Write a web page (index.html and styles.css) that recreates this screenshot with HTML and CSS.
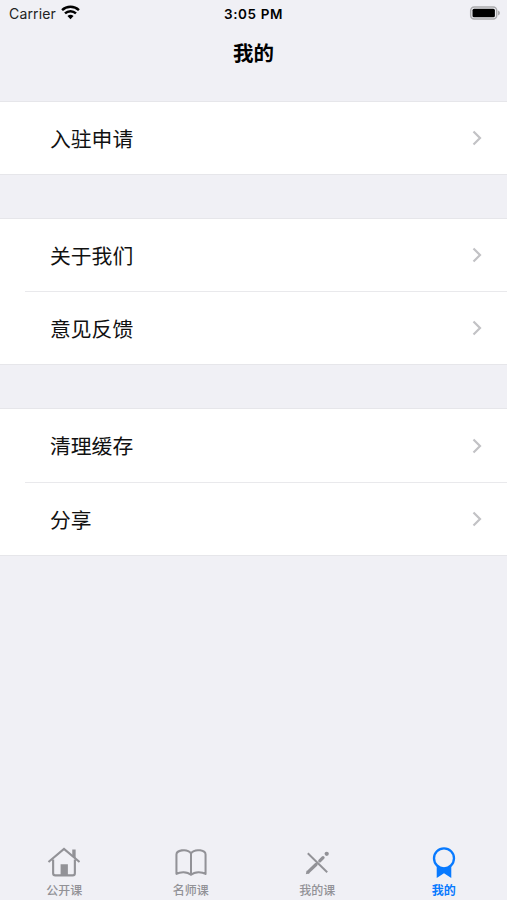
FILE: index.html
```html
<!DOCTYPE html>
<html lang="zh-CN">
<head>
  <meta charset="UTF-8">
  <meta name="viewport" content="width=device-width, initial-scale=1.0">
  <title>我的</title>
  <link rel="stylesheet" href="styles.css">
</head>
<body>

<header>
  <div class="status-bar">
    <div class="carrier">
      <span>Carrier</span>
      <svg class="wifi" viewBox="0 0 18 14" width="19" height="15">
        <path d="M1 4.8a11.5 11.5 0 0 1 16 0M3.8 7.9a7.5 7.5 0 0 1 10.4 0" fill="none" stroke="#000" stroke-width="2.3"/>
        <path d="M9 13.4l-2.9-3a4.2 4.2 0 0 1 5.8 0z" fill="#000"/>
      </svg>
    </div>
    <div class="time">3:05 PM</div>
    <div class="battery">
      <svg viewBox="0 0 31 14" width="31" height="14">
        <rect x="1.7" y="1" width="26" height="12" rx="3.5" fill="none" stroke="#aaaaad" stroke-width="1.5"/>
        <rect x="3.5" y="2.7" width="22.4" height="8.6" rx="1.5" fill="#000"/>
        <path d="M29 4.5q2 .8 2 2.5t-2 2.5z" fill="#aaaaad"/>
      </svg>
    </div>
  </div>
  <h1>我的</h1>
</header>

<main>
  <ul class="group">
    <li><a href="#apply"><span>入驻申请</span><svg class="arrow" viewBox="0 0 10 16"><path d="M1.5 1.5L8 8l-6.5 6.5"/></svg></a></li>
  </ul>
  <ul class="group">
    <li><a href="#about"><span>关于我们</span><svg class="arrow" viewBox="0 0 10 16"><path d="M1.5 1.5L8 8l-6.5 6.5"/></svg></a></li>
    <li><a href="#feedback"><span>意见反馈</span><svg class="arrow" viewBox="0 0 10 16"><path d="M1.5 1.5L8 8l-6.5 6.5"/></svg></a></li>
  </ul>
  <ul class="group">
    <li><a href="#cache"><span>清理缓存</span><svg class="arrow" viewBox="0 0 10 16"><path d="M1.5 1.5L8 8l-6.5 6.5"/></svg></a></li>
    <li><a href="#share"><span>分享</span><svg class="arrow" viewBox="0 0 10 16"><path d="M1.5 1.5L8 8l-6.5 6.5"/></svg></a></li>
  </ul>
</main>

<nav class="tabs">
  <a href="#open">
    <svg viewBox="0 0 36 34" width="36" height="34">
      <path d="M2 16.5L18 3l16 13.5" fill="none" stroke="currentColor" stroke-width="2.2"/>
      <path d="M6.8 14v14q0 2.3 2.3 2.3h17.8q2.3 0 2.3-2.3V14" fill="none" stroke="currentColor" stroke-width="2.2"/>
      <path d="M26.5 3.5H30v10L26.5 10zM14.5 18.8H22v11.5h-7.500z" fill="currentColor"/>
    </svg>
    <span>公开课</span>
  </a>
  <a href="#teacher">
    <svg viewBox="0 0 36 34" width="36" height="34">
      <path d="M18 7.5C15.8 4.5 12 4 8.5 4.5 5.3 5 3 6.4 3 8.8v19.9c3.5-2.2 11-2.8 15 1 4-3.8 11.5-3.2 15-1V8.8c0-2.4-2.3-3.8-5.5-4.3C24 4 20.2 4.5 18 7.5z" fill="none" stroke="currentColor" stroke-width="2.1" stroke-linejoin="round"/>
      <path d="M18 7.5v22" fill="none" stroke="currentColor" stroke-width="2.1"/>
    </svg>
    <span>名师课</span>
  </a>
  <a href="#lessons">
    <svg viewBox="0 0 36 34" width="36" height="34">
      <path d="M8.5 7.5L28.5 27" fill="none" stroke="currentColor" stroke-width="2"/>
      <path d="M9 26.7L17 19M20.900 15.300L24.200 12" fill="none" stroke="currentColor" stroke-width="3.4" stroke-linecap="round"/>
      <path d="M6.5 29.200l.9-4 3 3z" fill="currentColor"/>
      <circle cx="28" cy="8" r="2.2" fill="currentColor"/>
    </svg>
    <span>我的课</span>
  </a>
  <a href="#mine" class="active">
    <svg viewBox="0 0 36 34" width="36" height="34">
      <circle cx="18" cy="12.7" r="10.3" fill="none" stroke="currentColor" stroke-width="2.4"/>
      <path d="M10.5 20q7.5 5 15 0v13L18 28l-7.500 5z" fill="currentColor"/>
    </svg>
    <span>我的</span>
  </a>
</nav>

</body>
</html>
```
FILE: styles.css
```css
* {
  box-sizing: border-box;
}
body {
  margin: 0;
  height: 100vh;
  display: flex;
  flex-direction: column;
  overflow: hidden;
  font-family: "Inter", "Noto Sans CJK SC", sans-serif;
  background-color: #f0f0f5;
  color: #000;
}
header {
  height: 101px;
}
.status-bar {
  display: grid;
  grid-template-columns: 1fr auto 1fr;
  align-items: center;
  height: 27px;
  padding: 0 7px 0 9px;
  font-size: 14px;
}
.carrier {
  display: flex;
  align-items: center;
  gap: 5px;
  letter-spacing: 0.15px;
  color: #222;
}
.wifi {
  margin-top: -2px;
}
.time {
  margin-right: 2px;
  font-size: 13.5px;
  font-weight: 600;
  letter-spacing: 0.6px;
}
.battery {
  display: flex;
  justify-content: flex-end;
  margin-top: -1px;
}
h1 {
  margin: 12px 0 0;
  font-size: 20.5px;
  line-height: 30px;
  font-weight: 700;
  text-align: center;
}
main {
  flex: 1;
}
.group {
  margin: 0 0 43px;
  padding: 0;
  list-style: none;
  background-color: #fff;
  border-top: 1px solid #e6e6ea;
  border-bottom: 1px solid #e6e6ea;
}
.group a {
  display: flex;
  align-items: center;
  justify-content: space-between;
  height: 72px;
  margin-left: 25px;
  padding: 0 25px;
  font-size: 20.8px;
  color: #111;
  text-decoration: none;
}
.group a span {
  padding-bottom: 1px;
}
.group li + li a,
.group:last-child a {
  height: 73px;
}
.group li + li a {
  border-top: 1px solid #e9e9ec;
}
.arrow {
  width: 10px;
  height: 16px;
  fill: none;
  stroke: #c2c2c5;
  stroke-width: 2.2;
}
.tabs {
  display: flex;
  height: 56px;
  padding-left: 1px;
}
.tabs a {
  flex: 1;
  display: flex;
  flex-direction: column;
  align-items: center;
  padding-top: 2px;
  font-size: 12px;
  line-height: 18px;
  color: #929297;
  text-decoration: none;
}
.tabs span {
  margin-top: 3px;
  font-weight: 500;
}
.tabs .active {
  color: #087aff;
}
.tabs .active span {
  font-weight: 600;
}
```
